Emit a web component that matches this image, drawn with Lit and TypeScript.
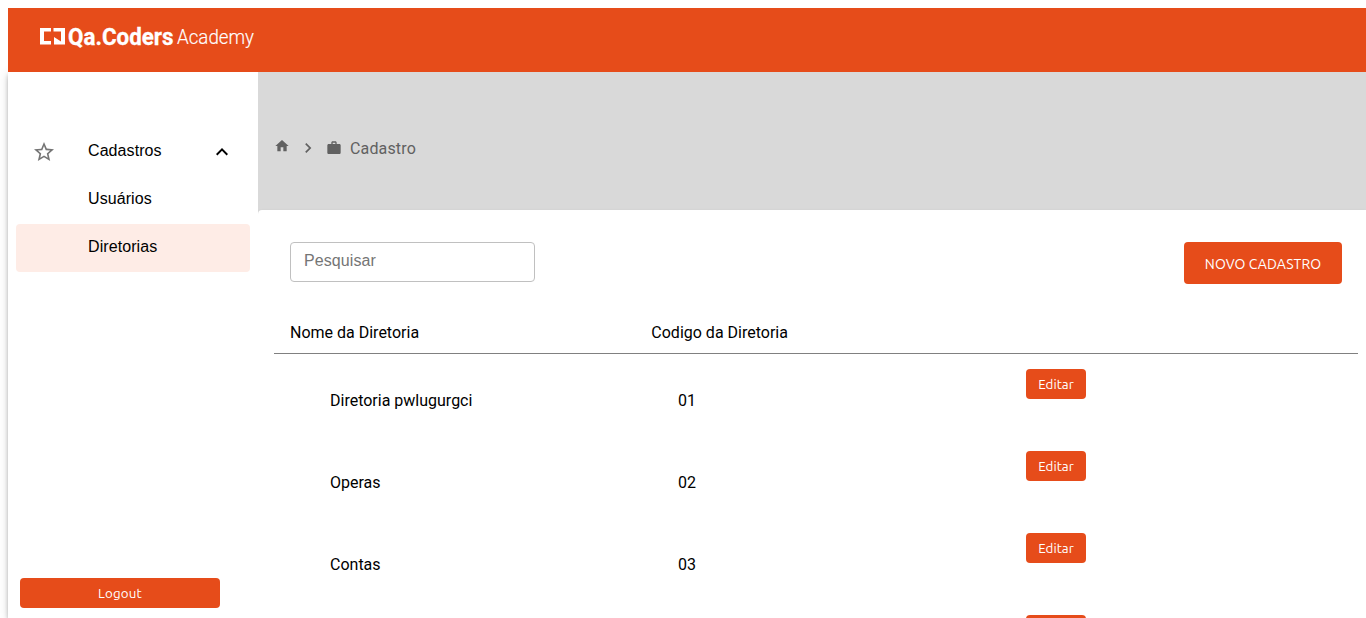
import { LitElement, html, css, svg } from "lit";
import { customElement } from "lit/decorators.js";

const icon = (cls: string, d: string) => html`<svg class="icon ${cls}" viewBox="0 0 24 24">${svg`<path d=${d}></path>`}</svg>`;

const STAR = "M22 9.24l-7.19-.62L12 2 9.19 8.63 2 9.24l5.46 4.73L5.82 21 12 17.27 18.18 21l-1.63-7.03L22 9.24zM12 15.4l-3.76 2.27 1-4.28-3.32-2.88 4.38-.38L12 6.1l1.71 4.04 4.38.38-3.32 2.88 1 4.28L12 15.4z";
const UP = "M12 8l-6 6 1.41 1.41L12 10.83l4.59 4.58L18 14z";
const HOME = "M10 20v-6h4v6h5v-8h3L12 3 2 12h3v8z";
const NEXT = "M10 6L8.59 7.41 13.17 12l-4.58 4.59L10 18l6-6z";
const WORK = "M20 6h-4V4c0-1.11-.89-2-2-2h-4c-1.11 0-2 .89-2 2v2H4c-1.11 0-1.99.89-1.99 2L2 19c0 1.11.89 2 2 2h16c1.11 0 2-.89 2-2V8c0-1.11-.89-2-2-2zm-6 0h-4V4h4v2z";

const ROWS = [
  { nome: "Diretoria pwlugurgci", codigo: "01" },
  { nome: "Operas", codigo: "02" },
  { nome: "Contas", codigo: "03" },
  { nome: "", codigo: "" },
];

@customElement("app-root")
export class AppRoot extends LitElement {
  static styles = css`
    :host {
      display: flex;
      flex-direction: column;
      box-sizing: border-box;
      height: 618px;
      padding: 8px 0 0 8px;
      overflow: hidden;
      background: #fff;
      color: #000;
      font: 16px/24px Roboto, sans-serif;
    }
    * { box-sizing: border-box; }
    .icon { display: block; flex: none; width: 24px; height: 24px; fill: currentColor; }
    .header { flex: none; height: 64px; padding: 16px 0 0 32px; background: #e64c1a; position: relative; }
    .logo { display: block; width: 220px; height: 28px; fill: #fff; }
    .logo-bold { font: 700 23px Roboto, sans-serif; stroke: #fff; stroke-width: 0.3; }
    .logo-light { font: 300 20.5px Roboto, sans-serif; stroke: #fff; stroke-width: 0.15; }
    .body { flex: 1; min-height: 0; display: flex; }
    .sidebar {
      width: 250px; flex: none; display: flex; flex-direction: column;
      padding: 56px 8px 10px; background: #fff;
      font-family: "Liberation Sans", Arial, sans-serif;
      box-shadow: 0 2px 4px -1px rgba(0,0,0,.2), 0 4px 5px rgba(0,0,0,.14), 0 1px 10px rgba(0,0,0,.12);
    }
    .item { flex: none; display: flex; height: 48px; padding: 11px 16px 0 72px; border-radius: 4px; }
    .item.parent { padding-left: 16px; }
    .item.active { background: #feece6; }
    .item .label { flex: 1; letter-spacing: 0.08px; }
    .star { color: #757575; margin: 1px 32px 0 0; }
    .up { margin-top: 1px; }
    .btn {
      display: flex; align-items: center; justify-content: center;
      height: 30px; border: 0; border-radius: 4px; padding: 2px 0 0;
      background: #e64c1a; color: #fff;
      font: 13.333px/18px Ubuntu, "Noto Sans", sans-serif;
    }
    .logout { width: 200px; margin: auto 0 0 4px; letter-spacing: 0.2px; }
    .main { flex: 1; min-width: 0; display: flex; flex-direction: column; background: #d9d9d9; overflow: hidden; }
    .crumbs { flex: none; display: flex; align-items: center; height: 138px; padding: 14px 0 0 16px; color: #616161; }
    .home { width: 16px; height: 16px; margin-bottom: 4px; }
    .next { width: 20px; height: 20px; margin: 0 8px; }
    .work { width: 16px; height: 16px; margin-right: 8px; }
    .crumb-text { letter-spacing: 0.15px; padding-top: 2px; }
    .panel {
      flex: 1; min-height: 0; padding: 32px 8px 0 16px; background: #fff; border-radius: 4px 0 0 0;
      box-shadow: 0 2px 1px -1px rgba(0,0,0,.2), 0 1px 1px rgba(0,0,0,.14), 0 1px 3px rgba(0,0,0,.12);
    }
    .tools { display: flex; justify-content: space-between; height: 69px; padding: 0 16px; }
    .search {
      width: 245px; height: 40px; padding: 0 13px 3px; border: 1px solid #c0c0c0; border-radius: 4px;
      font: 16px "Liberation Sans", Arial, sans-serif; letter-spacing: 0.1px; background: #fff;
    }
    .search::placeholder { color: #757575; opacity: 1; }
    .new { width: 158px; height: 42px; font-size: 14px; letter-spacing: 0.08px; }
    .head { display: grid; grid-template-columns: repeat(3, 1fr); height: 43px; padding-top: 10px; border-bottom: 1px solid #808080; }
    .head span { padding-left: 16px; }
    .row { display: grid; grid-template-columns: 348px 348px 60px; height: 82px; padding: 15px 0 0 56px; }
    .cell { padding-top: 20px; }
  `;

  render() {
    return html`
      <header class="header">
        <svg class="logo" viewBox="0 0 220 28">
          <path d="M0 4h11v3.500H4v9.500H11V20.500H0z"></path>
          <path d="M13.500 4H25v16.500H14v-7.500l7 4.500V7.500h-7.500z"></path>
          <text class="logo-bold" x="28" y="20.500" textLength="105.500" lengthAdjust="spacingAndGlyphs">Qa.Coders</text>
          <text class="logo-light" x="137" y="19.800" textLength="77" lengthAdjust="spacingAndGlyphs">Academy</text>
        </svg>
      </header>
      <div class="body">
        <nav class="sidebar">
          <div class="item parent">
            ${icon("star", STAR)}<span class="label">Cadastros</span>${icon("up", UP)}
          </div>
          <div class="item"><span class="label">Usuários</span></div>
          <div class="item active"><span class="label">Diretorias</span></div>
          <button class="btn logout">Logout</button>
        </nav>
        <main class="main">
          <div class="crumbs">
            ${icon("home", HOME)}${icon("next", NEXT)}${icon("work", WORK)}
            <span class="crumb-text">Cadastro</span>
          </div>
          <section class="panel">
            <div class="tools">
              <input class="search" placeholder="Pesquisar" />
              <button class="btn new">NOVO CADASTRO</button>
            </div>
            <div class="head"><span>Nome da Diretoria</span><span>Codigo da Diretoria</span></div>
            ${ROWS.map((r) => html`
              <div class="row">
                <span class="cell">${r.nome}</span>
                <span class="cell">${r.codigo}</span>
                <button class="btn">${r.nome ? "Editar" : ""}</button>
              </div>`)}
          </section>
        </main>
      </div>
    `;
  }
}
